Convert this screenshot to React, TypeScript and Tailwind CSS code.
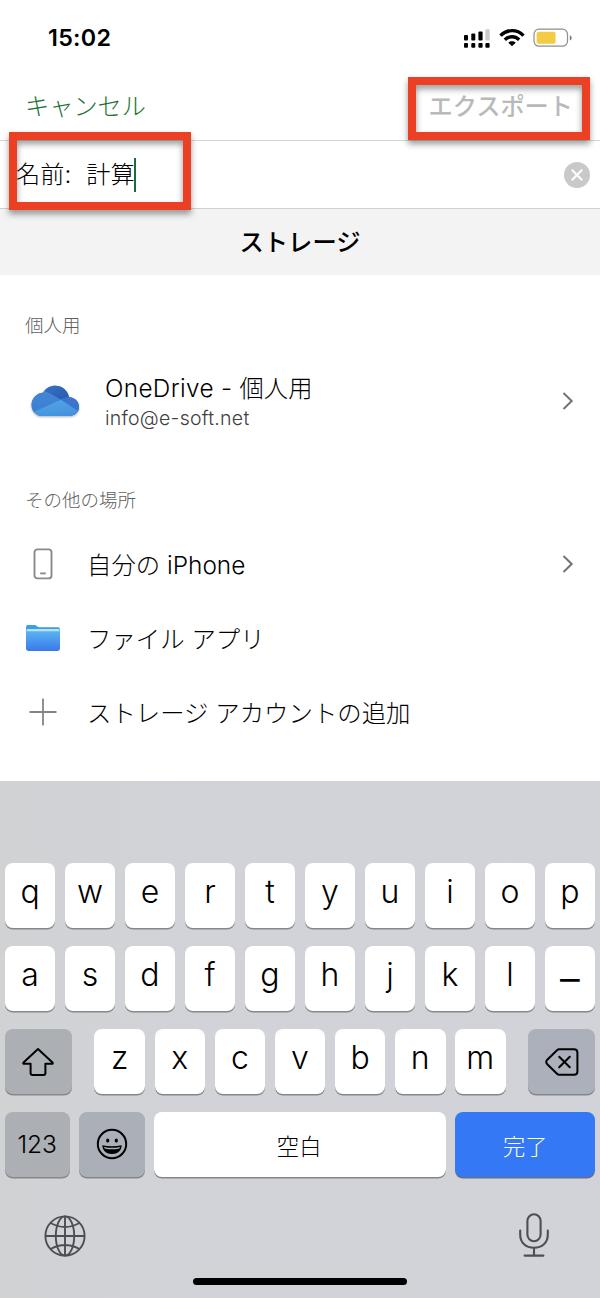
import React from "react";

const SignalIcon = () => (
  <svg width="28" height="20" viewBox="0 0 28 20" fill="#000">
    <rect x="1" y="7" width="4" height="5.5" rx="1" />
    <rect x="8.3" y="5.4" width="4" height="7.1" rx="1" />
    <rect x="15.4" y="3.4" width="4.2" height="9.1" rx="1" />
    <rect x="22.3" y="1.2" width="4.4" height="11.3" rx="1.2" fill="#cbcbcb" />
    <rect x="1" y="15" width="4" height="4.8" rx="1" />
    <rect x="8.3" y="15" width="4" height="4.8" rx="1" />
    <rect x="15.4" y="15" width="4.2" height="4.8" rx="1" />
    <rect x="22.4" y="15" width="4.2" height="4.8" rx="1" />
  </svg>
);

const WifiIcon = () => (
  <svg width="26" height="20" viewBox="0 0 26 20" fill="none" stroke="#000" strokeWidth="3.4">
    <path d="M1.5 7.6C8 1 18 1 24.5 7.6" />
    <path d="M5.8 11.7C10 7.8 16 7.8 20.2 11.7" />
    <path d="M13 18.3L9.3 14.7C11.2 12.8 14.8 12.8 16.7 14.7Z" fill="#000" stroke="none" />
  </svg>
);

const BatteryIcon = () => (
  <svg width="40" height="20" viewBox="0 0 40 20">
    <rect x="1" y="1.2" width="33.5" height="17" rx="5" fill="none" stroke="#8e8e8e" strokeWidth="1.2" />
    <rect x="3.6" y="3.8" width="19" height="12" rx="2" fill="#f5ca45" />
    <path d="M36.8 7.2C39.2 8 39.2 11.6 36.8 12.4Z" fill="#777" />
  </svg>
);

const OneDriveIcon = () => (
  <svg width="50" height="34" viewBox="0 0 50 34" className="drop-shadow-[0_1px_1px_rgba(0,0,0,0.3)]">
    <defs>
      <linearGradient id="od-back" x1="0" y1="0" x2="1" y2="1">
        <stop offset="0" stopColor="#3a74c4" />
        <stop offset="1" stopColor="#2659ae" />
      </linearGradient>
      <linearGradient id="od-base" x1="0" y1="0" x2="0" y2="1">
        <stop offset="0" stopColor="#4586d6" />
        <stop offset="1" stopColor="#3a7dd2" />
      </linearGradient>
      <linearGradient id="od-front" x1="0" y1="0" x2="0.3" y2="1">
        <stop offset="0" stopColor="#54a5e6" />
        <stop offset="1" stopColor="#4492de" />
      </linearGradient>
      <clipPath id="od-shape">
        <path d="M12.5 32C5.8 32 1.6 27 1.6 21C1.6 14 6.8 9 13.2 8.7C15.8 4.4 20.2 1.8 25.3 1.8C32 1.8 37.4 6.3 39 12.9C44.6 13.4 49 17.2 49 22.8C49 28.2 44.8 32 39 32Z" />
      </clipPath>
    </defs>
    <g clipPath="url(#od-shape)">
      <rect width="50" height="34" fill="#3a79cf" />
      <path d="M12 9C15 3 20 1 26 1C34 1 40 7 40 13C37 12.7 34 13.5 30.8 15.8L19 9.1C17 8.2 14 8.3 12 9Z" fill="url(#od-back)" />
      <path d="M0 6H12C17 8 20 9.2 31 15.8L0 30Z" fill="url(#od-base)" />
      <path d="M31 15.8C37 11.5 50 12 50 21V30Z" fill="#3a74cd" />
      <path d="M3 28.2L31 15.8L48 27L43 34H4Z" fill="url(#od-front)" />
    </g>
  </svg>
);

const PhoneIcon = () => (
  <svg width="20" height="32" viewBox="0 0 20 32" fill="none" stroke="#8a8a8a" strokeWidth="1.9">
    <rect x="1.5" y="1.4" width="17" height="29" rx="3" />
    <path d="M7.2 25.4H12.8" />
  </svg>
);

const FolderIcon = () => (
  <svg width="36" height="28" viewBox="0 0 36 28">
    <defs>
      <linearGradient id="folder" x1="0" y1="0" x2="0" y2="1">
        <stop offset="0" stopColor="#5ab3f3" />
        <stop offset="1" stopColor="#3a78ea" />
      </linearGradient>
    </defs>
    <path d="M1 3Q1 1 3 1H9.5C11.5 1 12 3.2 14 3.2H33Q35 3.2 35 5.2V12H1Z" fill="#399fe6" />
    <rect x="1.6" y="5" width="32.8" height="5" fill="#b9e1fa" />
    <path d="M1 7.2H35V24.6Q35 27 32.6 27H3.4Q1 27 1 24.6Z" fill="url(#folder)" />
  </svg>
);

const PlusIcon = () => (
  <svg width="28" height="28" viewBox="0 0 28 28" stroke="#858585" strokeWidth="1.8">
    <path d="M14 .5V27.5M.5 14H27.5" />
  </svg>
);

const Chevron = () => (
  <svg width="12" height="18" viewBox="0 0 12 18" fill="none" stroke="#737373" strokeWidth="2">
    <path d="M1.5 1L9.7 9L1.5 17" />
  </svg>
);

const ClearIcon = () => (
  <svg width="26" height="26" viewBox="0 0 26 26">
    <circle cx="13" cy="13" r="13" fill="#c9c9c9" />
    <path d="M8.3 8.3L17.7 17.7M17.7 8.3L8.3 17.7" stroke="#fff" strokeWidth="2" strokeLinecap="round" />
  </svg>
);

const ShiftIcon = () => (
  <svg width="34" height="30" viewBox="0 0 34 30" fill="none" stroke="#000" strokeWidth="2" strokeLinejoin="round">
    <path d="M17 2L31.5 15.4Q32.3 16.8 30.7 16.8H24.4V26Q24.4 28 22.4 28H11.6Q9.6 28 9.6 26V16.8H3.3Q1.7 16.8 2.5 15.4Z" />
  </svg>
);

const DeleteIcon = () => (
  <svg width="34" height="28" viewBox="0 0 34 28" fill="none" stroke="#000" strokeWidth="2" strokeLinecap="round" strokeLinejoin="round">
    <path d="M14.2 1.2H29Q32.4 1.2 32.4 4.6V23.4Q32.4 26.8 29 26.8H14.2Q13 26.8 12 25.8L2 16Q.5 14 2 12L12 2.2Q13 1.2 14.2 1.2Z" />
    <path d="M14.2 8.7L24.8 19.3M24.8 8.7L14.2 19.3" />
  </svg>
);

const EmojiIcon = () => (
  <svg width="32" height="32" viewBox="0 0 32 32">
    <circle cx="16" cy="16" r="14.2" fill="none" stroke="#000" strokeWidth="2" />
    <ellipse cx="11.7" cy="12.6" rx="1.6" ry="2.1" />
    <ellipse cx="20.3" cy="12.6" rx="1.6" ry="2.1" />
    <path d="M6.3 17.3Q16 19.4 25.7 17.3C25.5 23 21.5 26 16 26S6.5 23 6.3 17.3Z" />
    <path d="M8 18.9Q16 20.6 24 18.9L23.5 20.4Q16 22.2 8.5 20.4Z" fill="#abafb6" />
  </svg>
);

const GlobeIcon = () => (
  <svg width="42" height="42" viewBox="0 0 42 42" fill="none" stroke="#4b4f55" strokeWidth="1.9">
    <circle cx="21" cy="21" r="19.6" />
    <ellipse cx="21" cy="21" rx="9.2" ry="19.6" />
    <path d="M21 1.4V40.6M1.4 21H40.6M6.6 8Q21 16 35.4 8M6.6 34Q21 26 35.4 34" />
  </svg>
);

const MicIcon = () => (
  <svg width="30" height="44" viewBox="0 0 30 44" fill="none" stroke="#4b4f55" strokeWidth="2.1" strokeLinecap="round">
    <rect x="8.4" y="1.2" width="13.2" height="27" rx="6.6" />
    <path d="M1.2 17.5V21.5C1.2 30 7 34.8 15 34.8S28.8 30 28.8 21.5V17.5M15 35V42.6M5.6 42.6H24.4" />
  </svg>
);

const places = [
  { name: "自分の iPhone", icon: PhoneIcon, chevron: true },
  { name: "ファイル アプリ", icon: FolderIcon, chevron: false },
  { name: "ストレージ アカウントの追加", icon: PlusIcon, chevron: false },
];

const KeyCap = ({ label }: { label: string }) => (
  <div className="flex h-[65px] w-[50.7px] justify-center rounded-[8px] bg-white pt-[7px] text-[32px] leading-[44px] font-light shadow-[0_1.5px_0_#85878b]">
    {label === "_" ? <span className="text-[44px] leading-[21px]">_</span> : label}
  </div>
);

const Keyboard = () => (
  <div className="flex h-[517px] flex-col bg-linear-to-r from-[#d1d2d4] to-[#d1d3d9] to-40% px-[4.7px] pt-[82px]">
    <div className="flex flex-col gap-[18px]">
      {["qwertyuiop", "asdfghjkl_"].map((row) => (
        <div key={row} className="flex justify-between">
          {row.split("").map((c) => (
            <KeyCap key={c} label={c} />
          ))}
        </div>
      ))}
      <div className="flex justify-between">
        <div className="flex h-[65px] w-[67px] items-center justify-center rounded-[8px] bg-[#acafb3] shadow-[0_1.5px_0_#85878b]">
          <ShiftIcon />
        </div>
        <div className="flex gap-[9.4px]">
          {"zxcvbnm".split("").map((c) => (
            <KeyCap key={c} label={c} />
          ))}
        </div>
        <div className="flex h-[65px] w-[67px] items-center justify-center rounded-[8px] bg-[#abb0bb] shadow-[0_1.5px_0_#85878b]">
          <DeleteIcon />
        </div>
      </div>
      <div className="flex gap-[9.3px]">
        <div className="flex h-[65px] w-[65px] items-center justify-center rounded-[8px] bg-[#acafb3] text-[24.5px] font-light shadow-[0_1.5px_0_#85878b]">
          123
        </div>
        <div className="flex h-[65px] w-[66px] items-center justify-center rounded-[8px] bg-[#abafb7] pb-[2px] shadow-[0_1.5px_0_#85878b]">
          <EmojiIcon />
        </div>
        <div className="flex h-[65px] flex-1 items-center justify-center rounded-[8px] bg-white pt-1 pr-[2px] text-[22.3px] font-light shadow-[0_1.5px_0_#85878b]">
          空白
        </div>
        <div className="flex h-[65px] w-[140px] items-center justify-center rounded-[8px] bg-[#3478f6] pt-1 text-[22.3px] font-light text-white shadow-[0_1.5px_0_#66707f]">
          完了
        </div>
      </div>
    </div>
    <div className="flex justify-between pt-[36px] pr-[46px] pl-[39.5px]">
      <div className="pt-[2px]">
        <GlobeIcon />
      </div>
      <MicIcon />
    </div>
    <div className="mx-auto mt-[21px] h-[7px] w-[214px] rounded-full bg-black" />
  </div>
);

export default function App() {
  return (
    <div className="relative h-[1298px] w-[600px] overflow-hidden bg-white font-['Inter','Noto_Sans_CJK_JP',sans-serif] text-black">
      <div className="flex h-[71px] items-start justify-between pt-[23px] pr-[27px] pl-[48px]">
        <div className="text-[23.3px] leading-[30px] font-semibold tracking-[0.3px]">15:02</div>
        <div className="flex gap-[8px] pt-[5px]">
          <SignalIcon />
          <WifiIcon />
          <BatteryIcon />
        </div>
      </div>
      <div className="flex h-[70px] items-center justify-between border-b border-[#d6d6d6] pt-[3px] pr-[27px] pl-[25px] text-[24.2px]">
        <button className="font-light text-[#1a7430]">キャンセル</button>
        <button className="font-medium text-[#b9b9b9]">エクスポート</button>
      </div>
      <div className="flex h-[68px] items-center border-b border-[#d2d2d2] pr-[10.5px] pl-[16px] text-[24.2px] font-light">
        <span className="pt-[2px]">名前:</span>
        <span className="ml-[15px] pt-[2px]">計算</span>
        <span className="-ml-px h-[34px] w-[2.5px] bg-[#1b6a3a]" />
        <div className="ml-auto">
          <ClearIcon />
        </div>
      </div>
      <div className="flex h-[66px] items-center justify-center bg-[#f3f3f3] text-[24.3px] font-medium">ストレージ</div>

      <div className="h-[506px]">
        <div className="pt-[37px] pl-[25px] text-[18.5px] leading-[26px] font-light text-[#606060]">個人用</div>
        <div className="mt-[23px] flex h-[80px] items-center pr-[26px] pl-[30px]">
          <OneDriveIcon />
          <div className="ml-[25px] pt-[2px]">
            <div className="text-[24.3px] leading-[32px] font-light">
              <span className="tracking-[0.35px]">OneDrive - </span>個人用
            </div>
            <div className="text-[19.5px] leading-[28px] font-light tracking-[0.25px] text-[#404040]">info@e-soft.net</div>
          </div>
          <div className="ml-auto">
            <Chevron />
          </div>
        </div>
        <div className="mt-[46px] pl-[25px] text-[18.5px] leading-[26px] font-light text-[#606060]">その他の場所</div>
        <div className="mt-[14px]">
          {places.map((place) => (
            <div key={place.name} className="flex h-[74px] items-center pr-[26px] pl-[24px]">
              <div className="flex w-[38px] justify-center">
                <place.icon />
              </div>
              <div className="ml-[25px] pt-[3px] text-[24.4px] font-light">{place.name}</div>
              {place.chevron && (
                <div className="ml-auto">
                  <Chevron />
                </div>
              )}
            </div>
          ))}
        </div>
      </div>

      <Keyboard />

      {/* callout frames over the export button and the name field */}
      <div className="absolute top-[77px] left-[408px] h-[63px] w-[182px] border-8 border-[#ec4025] drop-shadow-[0_4px_3px_rgba(0,0,0,0.4)]" />
      <div className="absolute top-[132px] left-[9px] h-[78px] w-[182px] border-8 border-[#ec4025] drop-shadow-[0_4px_3px_rgba(0,0,0,0.4)]" />
    </div>
  );
}
